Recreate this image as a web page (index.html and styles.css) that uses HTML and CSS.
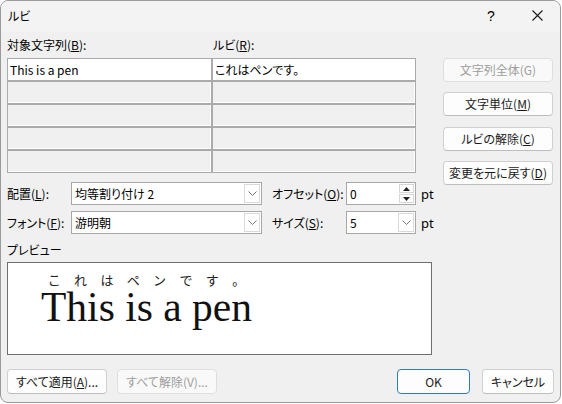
FILE: index.html
```html
<!DOCTYPE html>
<html lang="ja">
<head>
	<meta charset="UTF-8">
	<title>ルビ</title>
	<link rel="stylesheet" href="styles.css">
</head>
<body>
	<div class="dialog">
		<div class="titlebar">
			<span class="title">ルビ</span>
			<div class="caption">
				<span class="cap-btn help">?</span>
				<span class="cap-btn">
					<svg width="11" height="11" viewBox="0 0 11 11"><path d="M0.5 0.5L10.5 10.5M10.5 0.5L0.5 10.5" stroke="#1a1a1a" stroke-width="1.1" fill="none"/></svg>
				</span>
			</div>
		</div>
		<div class="content">
			<div class="main">
				<div class="left">
					<div class="cols labels">
						<span>対象文字列(<u>B</u>):</span>
						<span>ルビ(<u>R</u>):</span>
					</div>
					<div class="cols table">
						<div class="cell on">This is a pen</div>
						<div class="cell on">これはペンです。</div>
						<div class="cell"></div><div class="cell"></div>
						<div class="cell"></div><div class="cell"></div>
						<div class="cell"></div><div class="cell"></div>
						<div class="cell"></div><div class="cell"></div>
					</div>
					<div class="options">
						<span class="lbl">配置(<u>L</u>):</span>
						<div class="combo">
							<span class="val">均等割り付け 2</span>
							<span class="drop"><svg width="9" height="5" viewBox="0 0 9 5"><path d="M0.5 0.5L4.5 4.5L8.5 0.5" stroke="#777" fill="none"/></svg></span>
						</div>
						<span class="lbl gap">オフセット(<u>O</u>):</span>
						<div class="combo">
							<span class="val">0</span>
							<span class="spin">
								<span class="arrow"><svg width="7" height="4" viewBox="0 0 7 4"><path d="M0 4L3.5 0L7 4Z" fill="#222"/></svg></span>
								<span class="arrow"><svg width="7" height="4" viewBox="0 0 7 4"><path d="M0 0L3.5 4L7 0Z" fill="#222"/></svg></span>
							</span>
						</div>
						<span class="unit">pt</span>

						<span class="lbl">フォント(<u>F</u>):</span>
						<div class="combo">
							<span class="val">游明朝</span>
							<span class="drop"><svg width="9" height="5" viewBox="0 0 9 5"><path d="M0.5 0.5L4.5 4.5L8.5 0.5" stroke="#777" fill="none"/></svg></span>
						</div>
						<span class="lbl gap">サイズ(<u>S</u>):</span>
						<div class="combo">
							<span class="val">5</span>
							<span class="drop"><svg width="9" height="5" viewBox="0 0 9 5"><path d="M0.5 0.5L4.5 4.5L8.5 0.5" stroke="#777" fill="none"/></svg></span>
						</div>
						<span class="unit">pt</span>
					</div>
					<div class="plabel">プレビュー</div>
					<div class="preview">
						<div class="rb">
							<div class="rt">
								<span>こ</span><span>れ</span><span>は</span><span>ペ</span><span>ン</span><span>で</span><span>す</span><span>。</span>
							</div>
							<div class="base">This is a pen</div>
						</div>
					</div>
				</div>
				<div class="side">
					<button class="btn" disabled>文字列全体(G)</button>
					<button class="btn">文字単位(<u>M</u>)</button>
					<button class="btn">ルビの解除(<u>C</u>)</button>
					<button class="btn">変更を元に戻す(<u>D</u>)</button>
				</div>
			</div>
			<div class="footer">
				<button class="btn wide">すべて適用(<u>A</u>)...</button>
				<button class="btn wide" disabled>すべて解除(V)...</button>
				<button class="btn ok">OK</button>
				<button class="btn cancel">キャンセル</button>
			</div>
		</div>
	</div>
</body>
</html>
```

FILE: styles.css
```css
*{ margin:0; padding:0; box-sizing:border-box;}
body{ background:#fff; font-family:"Noto Sans CJK JP","Noto Sans",sans-serif; font-size:12px; color:#000; font-feature-settings:"palt";}
u{ text-decoration:underline; text-underline-offset:1px;}

.dialog{ width:561px; height:403px; border:1px solid #9a9a9a; border-radius:8px; background:#f0f0f0; overflow:hidden; display:flex; flex-direction:column;}
.titlebar{ height:31px; background:#f3f3f3; display:flex; align-items:center; justify-content:space-between;}
.titlebar .title{ padding-left:7px; line-height:16px; margin-top:-2px;}
.caption{ display:flex; height:100%;}
.cap-btn{ width:46px; display:flex; align-items:center; justify-content:center; margin-top:-2px;}
.cap-btn.help{ font-family:"Liberation Sans",sans-serif; font-size:14px;}

.content{ padding:0 6px;}
.main{ display:flex; gap:10px;}
.left{ width:426px;}
.side{ width:110px; padding-top:26px; display:flex; flex-direction:column; gap:10.4px;}

.cols{ display:grid; grid-template-columns:203px 202px; column-gap:2px;}
.labels{ padding:5px 0 5px 0; line-height:16px;}
.labels span:last-child{ padding-left:1px;}
.table{ width:409px; background:#ababab; padding:1px; row-gap:2px; grid-auto-rows:21px;}
.cell{ background:#f0f0f0; box-shadow:inset -1px -1px 0 #fff; line-height:21px; padding-left:2px; white-space:nowrap;}
.cell.on{ background:#fff; box-shadow:none;}

.options{ display:grid; grid-template-columns:64px 191px 84px 70px auto; grid-auto-rows:23px; row-gap:6px; margin-top:9px; align-items:center;}
.lbl{ line-height:16px; white-space:nowrap;}
.lbl.gap{ padding-left:10px;}
.unit{ padding-left:5px; font-family:"Noto Sans",sans-serif; font-size:13px;}
.combo{ height:23px; background:#fff; border:1px solid #a8a8a8; display:flex; align-items:stretch;}
.combo .val{ flex:1; padding-left:3px; line-height:21px; white-space:nowrap;}
.drop{ width:16px; margin:1px; border:1px solid #dadada; display:flex; align-items:center; justify-content:center;}
.spin{ width:15px; margin:1px; display:flex; flex-direction:column; gap:1px;}
.arrow{ flex:1; border:1px solid #d6d6d6; display:flex; align-items:center; justify-content:center;}

.plabel{ margin-top:8px; line-height:16px;}
.preview{ margin-top:4px; width:425px; height:93px; background:#fff; border:1px solid #6e6e6e; padding:8px 0 0 33px;}
.rb{ display:inline-flex; flex-direction:column;}
.rt{ display:flex; justify-content:space-around; height:13px; font-size:13px; line-height:13px; color:#222; font-feature-settings:normal;}
.base{ font-family:"Liberation Serif",serif; font-size:41.5px; line-height:40px; margin-top:1px; color:#111;}

.btn{ height:24px; background:#fdfdfd; border:1px solid #d0d0d0; border-bottom-color:#bdbdbd; border-radius:4px; font-family:inherit; font-size:12px; color:#1a1a1a; line-height:20px; white-space:nowrap; font-feature-settings:"palt";}
.btn:disabled{ color:#9d9d9d; background:#f9f9f9; border-color:#dedede;}
.footer{ display:flex; margin-top:14px; gap:10px;}
.footer .btn{ height:25px;}
.btn.wide{ width:100px;}
.btn.ok{ width:73px; margin-left:auto; border-color:#2e7bc4; margin-right:2px;}
.btn.cancel{ width:72px;}
```
